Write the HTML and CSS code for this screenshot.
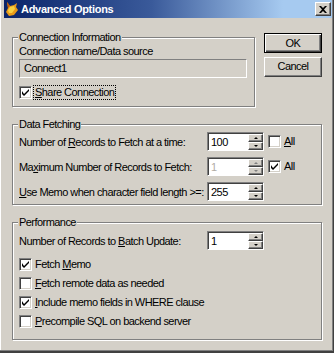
FILE: index.html
```html
<html lang="en">
<head>
    <meta charset="UTF-8">
    <title>Advanced Options</title>
    <link rel="stylesheet" href="styles.css">
</head>
<body>
<div class="window">
    <div class="titlebar">
        <svg class="app-icon" width="12" height="14" viewBox="0 0 12 14">
            <polygon points="1,0 4,4 8,3 11,1 10,5 12,8 8,13 3,14 0,10 2,6" fill="#e89a18"/>
            <polygon points="4,5 8,4 9,7 6,11 3,11 2,8" fill="#f8d040"/>
            <polygon points="1,0 4,4 2,6" fill="#c05a08"/>
        </svg>
        <span class="title">Advanced Options</span>
        <span class="close-btn">
            <svg width="8" height="7" viewBox="0 0 8 7">
                <path d="M0 0 L2 0 L4 2 L6 0 L8 0 L5 3.5 L8 7 L6 7 L4 5 L2 7 L0 7 L3 3.5 Z" fill="#000"/>
            </svg>
        </span>
    </div>

    <div class="content">
        <div class="top-row">
            <div class="group conn">
                <span class="legend">Connection Information</span>
                <div class="field-label">Connection name/Data source</div>
                <div class="textbox">Connect1</div>
                <div class="check-row">
                    <span class="checkbox"><svg width="7" height="7" viewBox="0 0 7 7"><path d="M0 2 L0 5 L2 7 L7 2 L7 0 L2 5 Z" fill="#000"/></svg></span>
                    <span class="check-label focus"><u>S</u>hare Connection</span>
                </div>
            </div>
            <div class="buttons">
                <div class="btn default">OK</div>
                <div class="btn">Cancel</div>
            </div>
        </div>

        <div class="group fetch">
            <span class="legend">Data Fetching</span>
            <div class="row">
                <span class="row-label">Number of <u>R</u>ecords to Fetch at a time:</span>
                <div class="spin">
                    <span class="spin-value">100</span>
                    <span class="spin-btns">
                        <span class="spin-btn"><i class="arrow-up"></i></span>
                        <span class="spin-btn"><i class="arrow-down"></i></span>
                    </span>
                </div>
                <span class="checkbox all"></span>
                <span class="check-label"><u>A</u>ll</span>
            </div>
            <div class="row">
                <span class="row-label">Ma<u>x</u>imum Number of Records to Fetch:</span>
                <div class="spin disabled">
                    <span class="spin-value">1</span>
                    <span class="spin-btns">
                        <span class="spin-btn"><i class="arrow-up"></i></span>
                        <span class="spin-btn"><i class="arrow-down"></i></span>
                    </span>
                </div>
                <span class="checkbox all"><svg width="7" height="7" viewBox="0 0 7 7"><path d="M0 2 L0 5 L2 7 L7 2 L7 0 L2 5 Z" fill="#000"/></svg></span>
                <span class="check-label">All</span>
            </div>
            <div class="row">
                <span class="row-label"><u>U</u>se Memo when character field length &gt;=:</span>
                <div class="spin">
                    <span class="spin-value">255</span>
                    <span class="spin-btns">
                        <span class="spin-btn"><i class="arrow-up"></i></span>
                        <span class="spin-btn"><i class="arrow-down"></i></span>
                    </span>
                </div>
            </div>
        </div>

        <div class="group perf">
            <span class="legend">Performance</span>
            <div class="row">
                <span class="row-label">Number of Records to <u>B</u>atch Update:</span>
                <div class="spin">
                    <span class="spin-value">1</span>
                    <span class="spin-btns">
                        <span class="spin-btn"><i class="arrow-up"></i></span>
                        <span class="spin-btn"><i class="arrow-down"></i></span>
                    </span>
                </div>
            </div>
            <div class="check-list">
                <div class="check-row">
                    <span class="checkbox"><svg width="7" height="7" viewBox="0 0 7 7"><path d="M0 2 L0 5 L2 7 L7 2 L7 0 L2 5 Z" fill="#000"/></svg></span>
                    <span class="check-label">Fetch <u>M</u>emo</span>
                </div>
                <div class="check-row">
                    <span class="checkbox"></span>
                    <span class="check-label"><u>F</u>etch remote data as needed</span>
                </div>
                <div class="check-row">
                    <span class="checkbox"><svg width="7" height="7" viewBox="0 0 7 7"><path d="M0 2 L0 5 L2 7 L7 2 L7 0 L2 5 Z" fill="#000"/></svg></span>
                    <span class="check-label"><u>I</u>nclude memo fields in WHERE clause</span>
                </div>
                <div class="check-row">
                    <span class="checkbox"></span>
                    <span class="check-label"><u>P</u>recompile SQL on backend server</span>
                </div>
            </div>
        </div>
    </div>
</div>
</body>
</html>
```

FILE: styles.css
```css
/* Dialog styles */
body {
    margin: 0;
    padding: 0;
    font-family: "Liberation Sans", Arial, sans-serif;
    font-size: 11px;
    letter-spacing: -0.55px;
    color: #000;
}

.window {
    box-sizing: border-box;
    width: 334px;
    height: 353px;
    padding: 0 1px 0 3px;
    background-color: #d4d0c8;
    border-right: 1px solid #404040;
    border-bottom: 2px solid #404040;
    box-shadow: inset -1px -1px #808080, inset 1px 0 #fff;
}

/* Title bar */
.titlebar {
    display: flex;
    align-items: center;
    height: 18px;
    margin-left: 1px;
    padding: 0 1px 0 2px;
    background: linear-gradient(to right, #0a246a 0%, #3a5a9a 45%, #a6caf0 85%, #a6caf0 100%);
}

.app-icon {
    display: block;
}

.title {
    margin-left: 3px;
    color: #fff;
    font-weight: bold;
    font-size: 11px;
    letter-spacing: -0.3px;
}

.close-btn {
    box-sizing: border-box;
    display: flex;
    align-items: center;
    justify-content: center;
    width: 16px;
    height: 14px;
    margin-left: auto;
    background-color: #d4d0c8;
    border: 1px solid;
    border-color: #fff #404040 #404040 #fff;
    box-shadow: inset -1px -1px #808080;
}

/* Content */
.content {
    padding-left: 9px;
}

.top-row {
    display: flex;
    align-items: flex-start;
    padding-top: 15px;
}

.group {
    position: relative;
    box-sizing: border-box;
    width: 310px;
    border: 1px solid #808080;
    box-shadow: inset 1px 1px #fff, 1px 1px #fff;
    padding-left: 6px;
}

.legend {
    position: absolute;
    top: -7px;
    left: 5px;
    padding: 0 1px;
    line-height: 13px;
    background-color: #d4d0c8;
}

.conn {
    width: 243px;
    margin-top: 4px;
    padding-top: 7px;
    padding-bottom: 6px;
}

.field-label {
    line-height: 13px;
}

.textbox {
    box-sizing: border-box;
    width: 228px;
    height: 19px;
    margin-top: 1px;
    padding-left: 4px;
    line-height: 17px;
    border: 1px solid;
    border-color: #808080 #fff #fff #808080;
}

.check-row {
    display: flex;
    align-items: center;
    height: 15px;
}

.conn .check-row {
    margin-top: 7px;
}

.checkbox {
    box-sizing: border-box;
    display: flex;
    flex: none;
    align-items: center;
    justify-content: center;
    width: 13px;
    height: 13px;
    background-color: #fff;
    border: 1px solid;
    border-color: #808080 #fff #fff #808080;
    box-shadow: inset 1px 1px #404040, inset -1px -1px #d4d0c8;
}

.check-label {
    margin-left: 3px;
    line-height: 13px;
    white-space: nowrap;
}

.focus {
    margin-left: 1px;
    padding: 0 1px;
    border: 1px dotted #000;
}

/* Buttons */
.buttons {
    display: flex;
    flex-direction: column;
    gap: 4px;
    margin-left: 9px;
}

.btn {
    box-sizing: border-box;
    width: 58px;
    height: 20px;
    line-height: 16px;
    text-align: center;
    background-color: #d4d0c8;
    border: 1px solid;
    border-color: #fff #404040 #404040 #fff;
    box-shadow: inset -1px -1px #808080;
}

.btn.default {
    border: 1px solid #000;
    box-shadow: inset 1px 1px #fff, inset -1px -1px #404040, inset -2px -2px #808080;
    line-height: 18px;
}

/* Data fetching / performance */
.fetch {
    margin-top: 17px;
    padding-top: 7px;
    padding-bottom: 3px;
}

.perf {
    margin-top: 17px;
    padding-top: 8px;
    padding-bottom: 10px;
}

.row {
    display: flex;
    align-items: center;
    height: 19px;
    margin-bottom: 6px;
}

.fetch .row:last-child {
    margin-bottom: 0;
}

.perf .row {
    margin-bottom: 7px;
}

.row-label {
    flex: none;
    width: 188px;
    white-space: nowrap;
    overflow: hidden;
}

.checkbox.all {
    margin-left: 4px;
}

.spin {
    box-sizing: border-box;
    display: flex;
    flex: none;
    width: 57px;
    height: 19px;
    background-color: #fff;
    border: 1px solid;
    border-color: #808080 #fff #fff #808080;
    box-shadow: inset 1px 1px #404040;
    padding: 1px 0 0 1px;
}

.spin-value {
    flex: 1;
    padding-left: 2px;
    line-height: 16px;
}

.spin.disabled .spin-value {
    color: #b0aca4;
}

.spin-btns {
    display: flex;
    flex-direction: column;
    width: 15px;
}

.spin-btn {
    box-sizing: border-box;
    display: flex;
    align-items: center;
    justify-content: center;
    height: 8px;
    background-color: #d4d0c8;
    border: 1px solid;
    border-color: #fff #404040 #404040 #fff;
    box-shadow: inset -1px -1px #808080;
}

.arrow-up,
.arrow-down {
    width: 0;
    height: 0;
    border-left: 2px solid transparent;
    border-right: 2px solid transparent;
}

.arrow-up {
    border-bottom: 2px solid #000;
}

.arrow-down {
    border-top: 2px solid #000;
}

.spin.disabled .arrow-up {
    border-bottom-color: #808080;
}

.spin.disabled .arrow-down {
    border-top-color: #808080;
}

.check-list {
    display: flex;
    flex-direction: column;
    gap: 4px;
}
```
